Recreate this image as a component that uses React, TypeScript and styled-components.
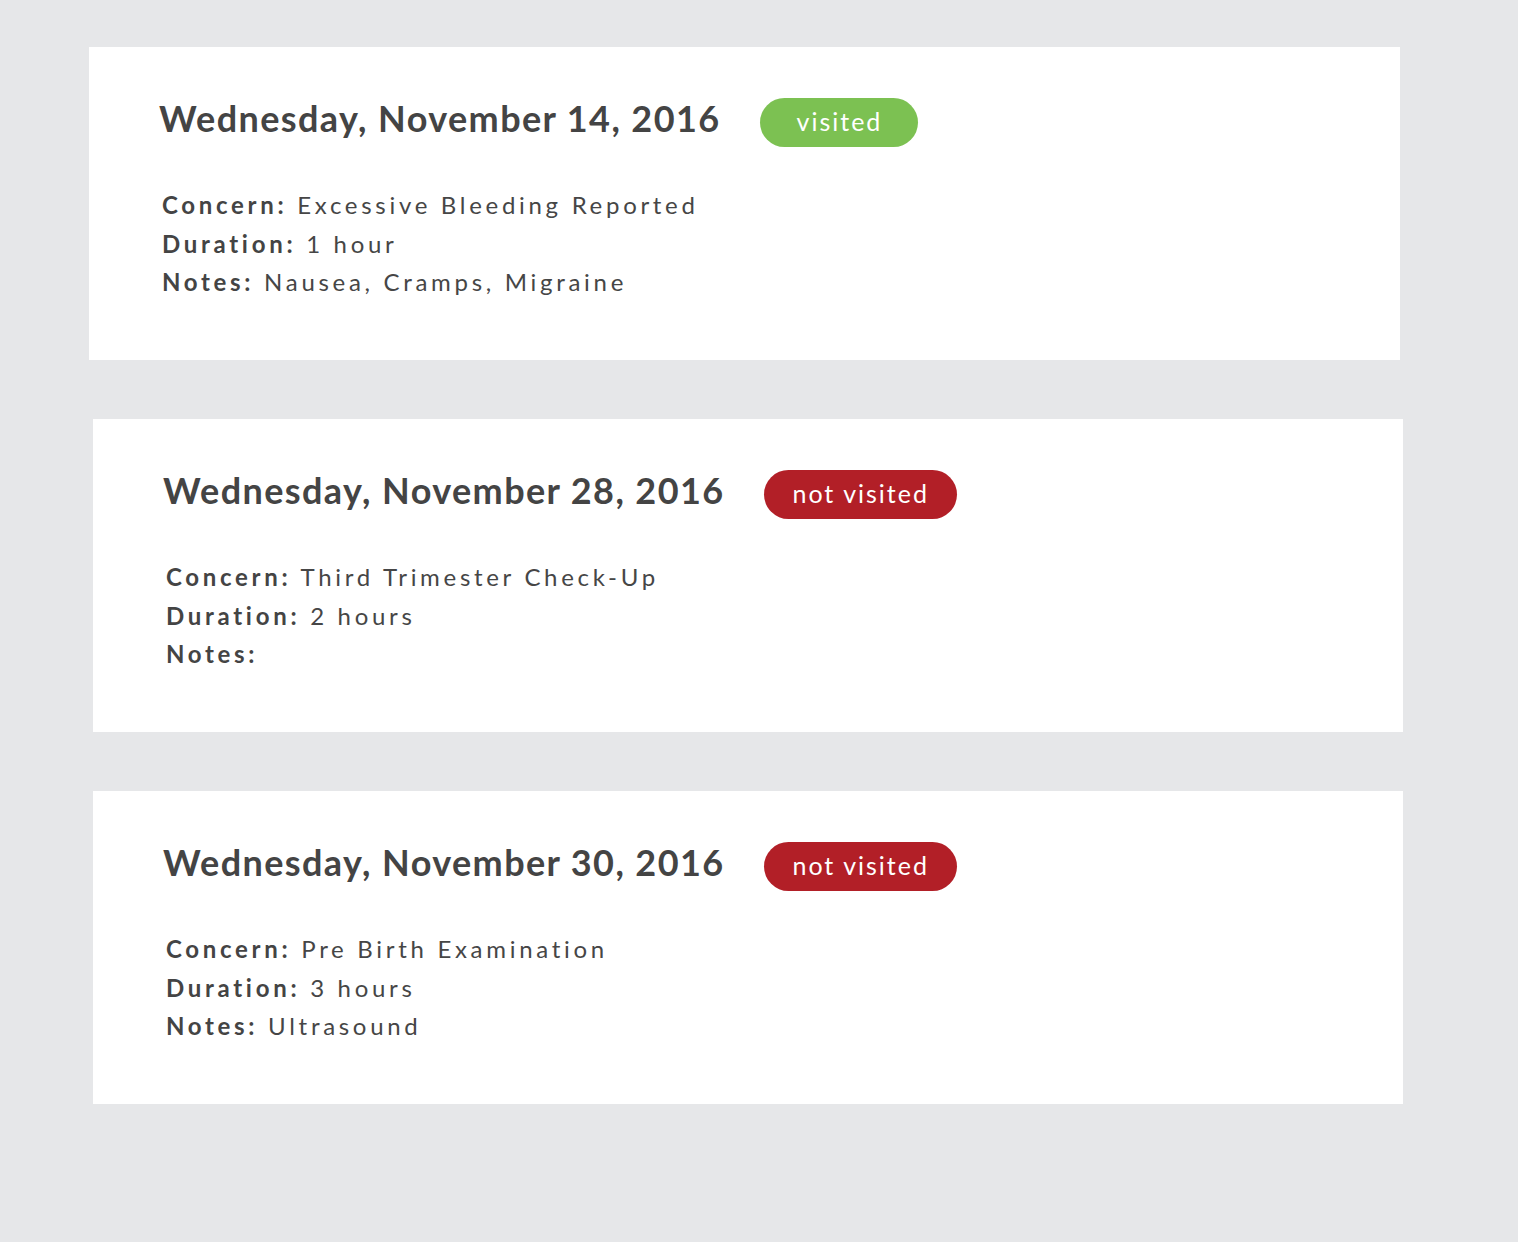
import React from "react"
import styled, { createGlobalStyle } from "styled-components"

type Visit = {
    date: string
    visited: boolean
    concern: string
    duration: string
    notes: string
    shift: number
}

const visits: Visit[] = [
    { date: "Wednesday, November 14, 2016", visited: true, concern: "Excessive Bleeding Reported", duration: "1 hour", notes: "Nausea, Cramps, Migraine", shift: 0 },
    { date: "Wednesday, November 28, 2016", visited: false, concern: "Third Trimester Check-Up", duration: "2 hours", notes: "", shift: 4 },
    { date: "Wednesday, November 30, 2016", visited: false, concern: "Pre Birth Examination", duration: "3 hours", notes: "Ultrasound", shift: 4 },
]

const GlobalStyle = createGlobalStyle`
body {
  margin: 0;
  background: #e6e7e9;
  font-family: 'Lato', 'Liberation Sans', sans-serif;
  color: #464646;
}
`;

const Page = styled.div`
display: flex;
flex-direction: column;
gap: 59.5px;
padding: 47px 0 136px 89px;
min-height: 1242px;
box-sizing: border-box;
`;

const Card = styled.section<{ $shift: number }>`
width: ${p => 1311 - (p.$shift ? 1 : 0)}px;
box-sizing: border-box;
background: #ffffff;
margin-left: ${p => p.$shift}px;
padding: 51px 0 58px 70px;
`;

const Header = styled.div`
display: flex;
flex-direction: row;
align-items: flex-start;
gap: 40px;
`;

const Title = styled.h2`
margin: 0;
font-size: 36px;
font-weight: 700;
line-height: 40px;
letter-spacing: 1.4px;
color: #444444;
white-space: nowrap;
`;

const Badge = styled.span<{ $visited: boolean }>`
display: inline-flex;
align-items: center;
justify-content: center;
height: 49px;
min-width: 158px;
padding: 0 28px 4px;
border-radius: 25px;
box-sizing: border-box;
background: ${p => (p.$visited ? "#7cc152" : "#b21f27")};
color: #ffffff;
font-size: 25px;
letter-spacing: 2px;
white-space: nowrap;
`;

const Details = styled.div`
margin-top: 39px;
padding-left: 3px;
font-size: 24px;
line-height: 38.5px;
letter-spacing: 3.7px;
`;

const Row = styled.div`
white-space: nowrap;
`;

const Label = styled.b`
font-weight: 700;
color: #444444;
`;

export default function App() {
    return (
        <>
            <GlobalStyle />
            <Page>
                {visits.map(v => (
                    <Card key={v.date} $shift={v.shift}>
                        <Header>
                            <Title>{v.date}</Title>
                            <Badge $visited={v.visited}>{v.visited ? "visited" : "not visited"}</Badge>
                        </Header>
                        <Details>
                            <Row><Label>Concern:</Label> {v.concern}</Row>
                            <Row><Label>Duration:</Label> {v.duration}</Row>
                            <Row><Label>Notes:</Label> {v.notes}</Row>
                        </Details>
                    </Card>
                ))}
            </Page>
        </>
    )
}
